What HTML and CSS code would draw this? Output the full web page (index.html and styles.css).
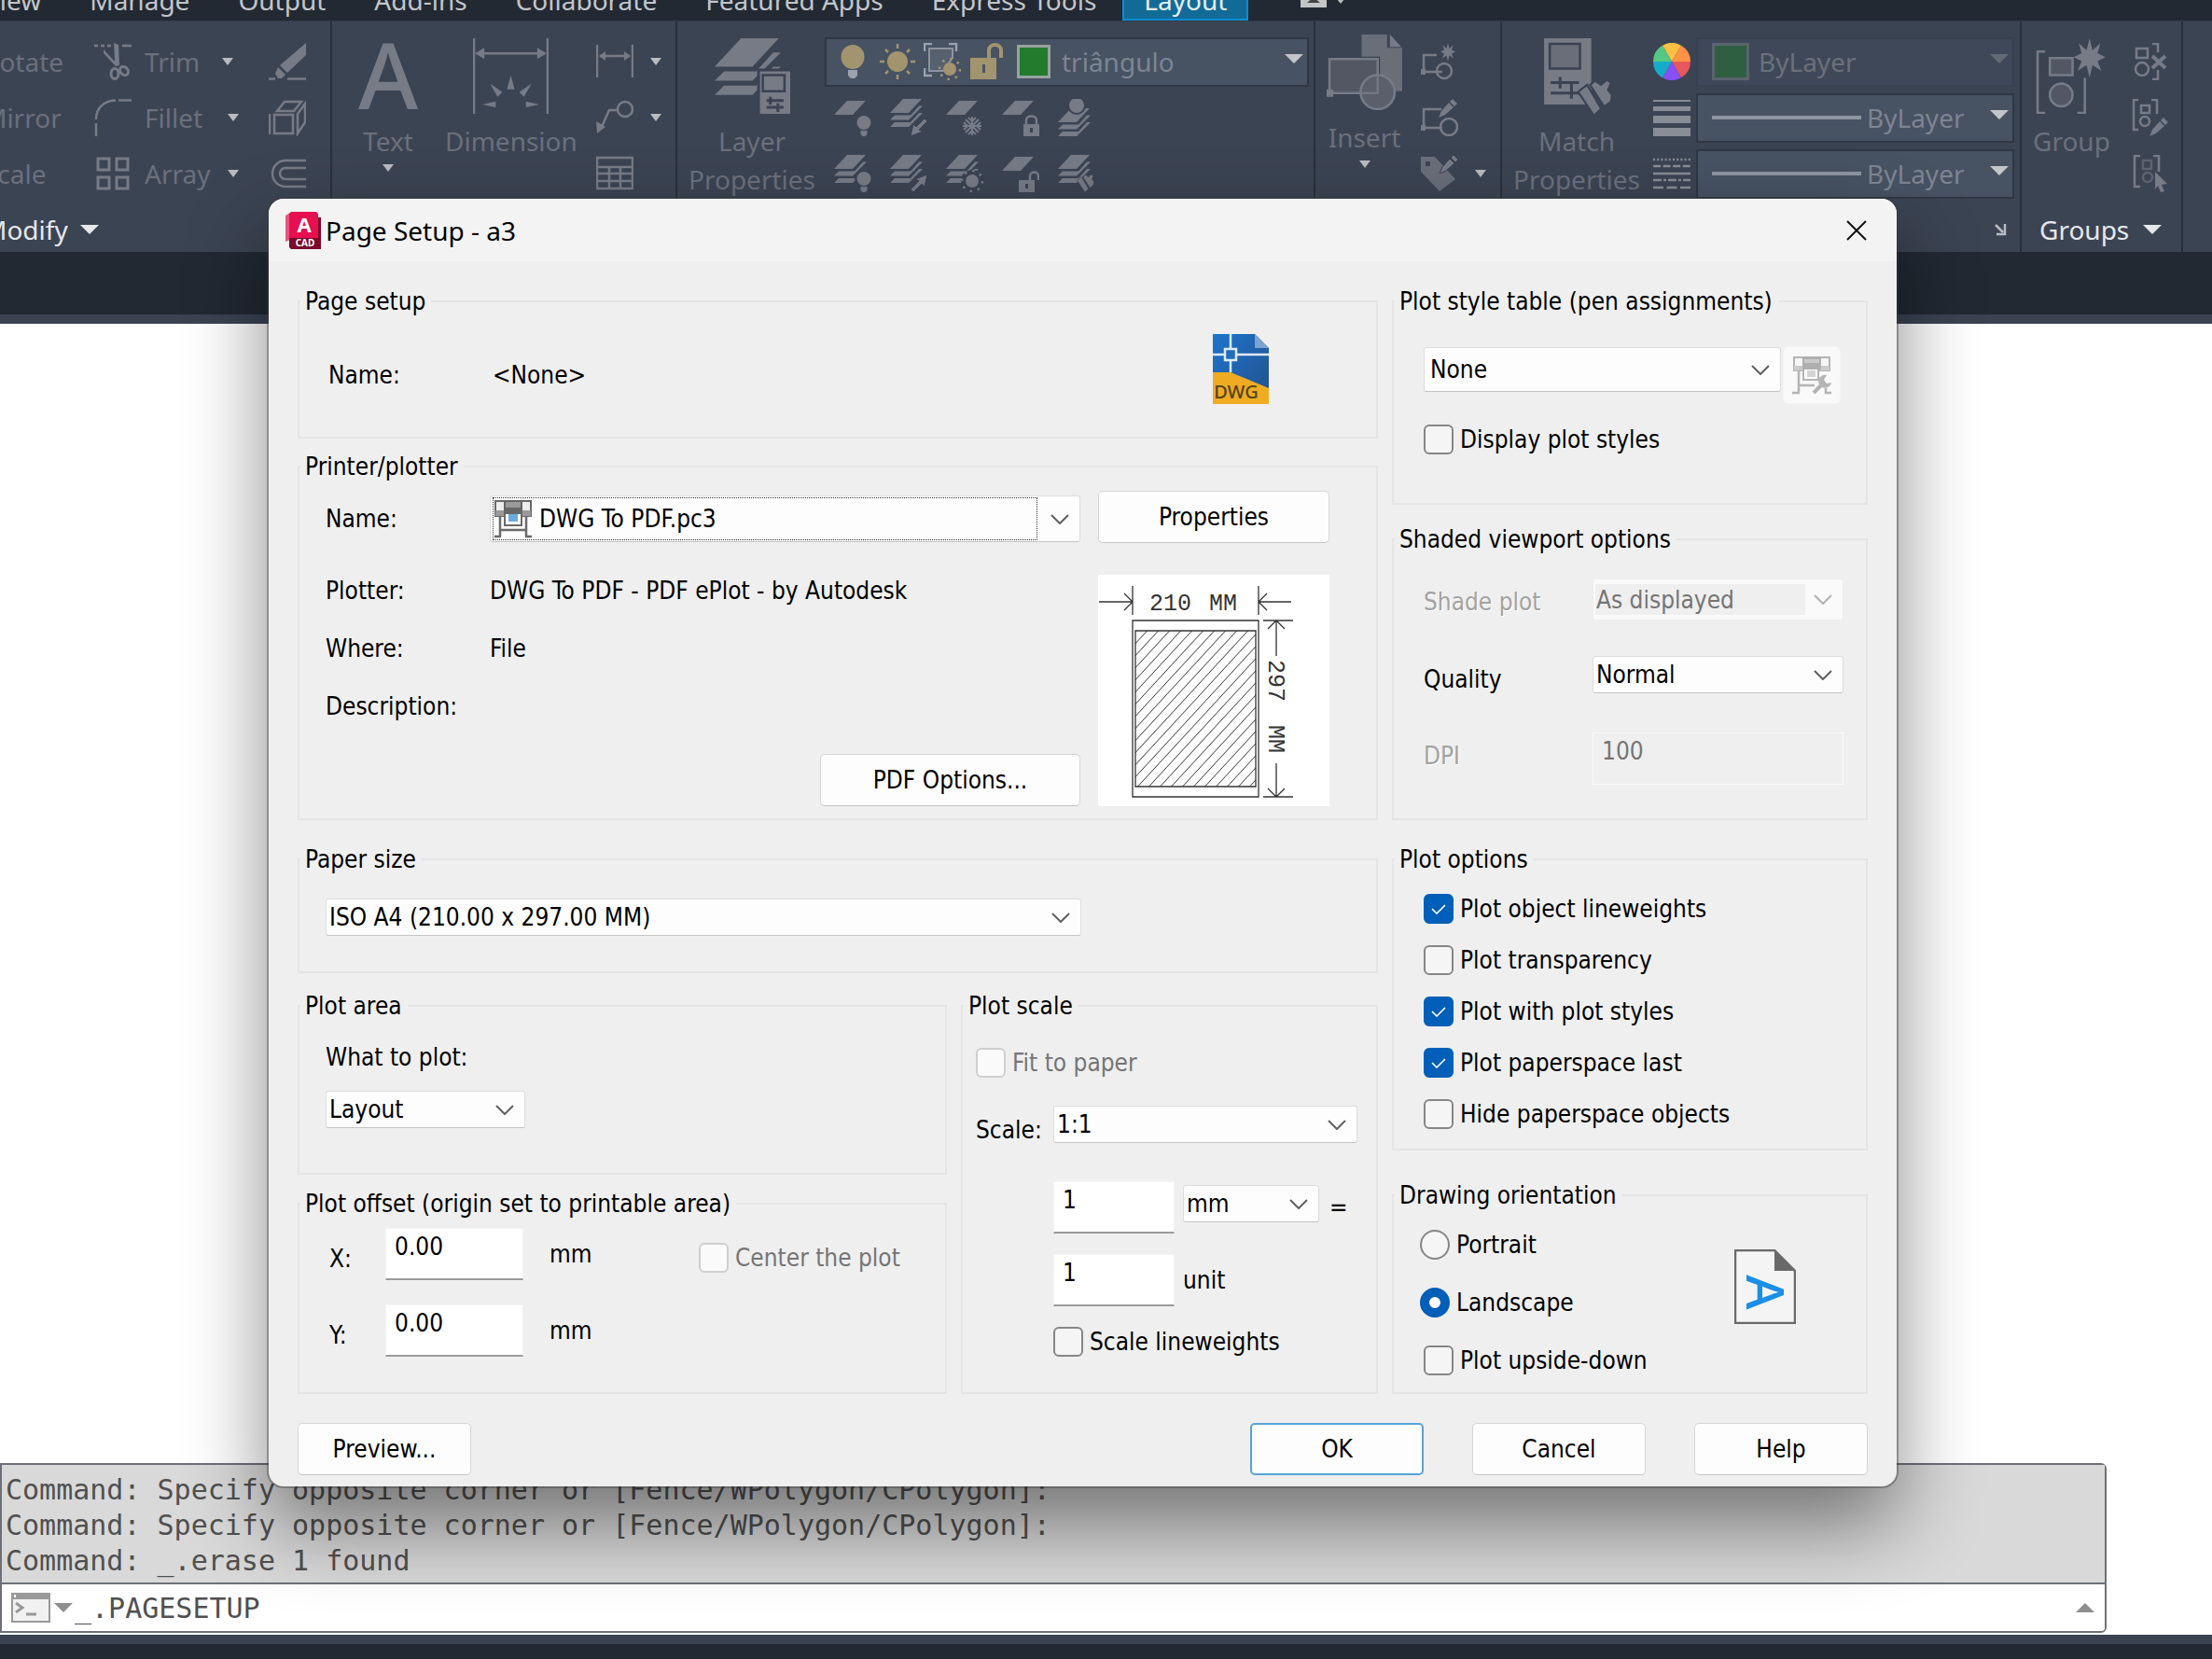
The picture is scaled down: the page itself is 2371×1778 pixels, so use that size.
FILE: index.html
```
<!DOCTYPE html>
<html lang="en">
<head>
  <meta charset="UTF-8" />
  <meta name="viewport" content="width=device-width, initial-scale=1.0"/>
  <title>Page Setup - a3</title>
  <link rel="stylesheet" href="styles.css">
</head>
<body>
  <!-- shared icon parts -->
  <svg class="defs" aria-hidden="true">
    <symbol id="sheet" viewBox="0 0 40 40"><path d="M14 2h20L20 17H0z"/></symbol>
    <symbol id="sheets" viewBox="0 0 40 40">
      <path d="M14 0h20L20 15H0zM0 22.5l5-5h17l9-10h4L20 22.5zM0 30l5-5h17l9-10h4L20 30z"/>
    </symbol>
    <symbol id="bulb" viewBox="0 0 16 22"><circle cx="8" cy="7.500" r="7.500"/><path d="M4.500 16h7v4l-2 2h-3l-2-2z"/></symbol>
    <symbol id="pencil" viewBox="0 0 20 20"><path d="M15 0l5 5-3 3-5-5zM11 4l5 5-9 8-7 3 3-7z"/></symbol>
    <symbol id="brush" viewBox="0 0 34 36"><path d="M0 12L9 5l14 24-7 7zM12 5l5-4 6 4 6-5 4 3-3 7 4 5-1 7-7 5z"/></symbol>
    <symbol id="burst" viewBox="0 0 32 40"><path d="M16 0l3 12 8-7-3 10 8 4-8 4 4 10-9-6-3 13-3-13-9 6 4-10-8-4 8-4-3-10 8 7z"/></symbol>
  </svg>

  <nav class="tab-bar">
    <button class="tab">View</button>
    <button class="tab">Manage</button>
    <button class="tab">Output</button>
    <button class="tab">Add-ins</button>
    <button class="tab">Collaborate</button>
    <button class="tab">Featured Apps</button>
    <button class="tab">Express Tools</button>
    <button class="tab tab-active">Layout</button>
    <button class="tab-toggle" aria-label="Minimize ribbon"><svg width="50" height="24" viewBox="0 0 50 24"><path d="M0 0h28v24H0z" fill="#c4c5c7"/><path d="M14 13l7 6H7z" fill="#444"/><path d="M38 14h10l-5 6z" fill="#b9bbbf"/></svg></button>
  </nav>

  <div class="ribbon">
    <section class="panel panel-modify">
      <div class="panel-body">
        <div class="tool-col tool-col-text">
          <button class="tool">Rotate</button>
          <button class="tool">Mirror</button>
          <button class="tool">Scale</button>
        </div>
        <div class="tool-col tool-col-wide">
          <button class="tool">
            <svg class="icon" viewBox="0 0 40 40"><path d="M0 3h4M7 3h4M14 3h4M30 3h10" stroke="currentColor" stroke-width="2.500" fill="none"/><path d="M21 0l5 2 1 22-4 1-13-14 0-4 12 13z" fill="currentColor"/><g fill="none" stroke="currentColor" stroke-width="3"><ellipse cx="22" cy="33" rx="4" ry="5.500"/><ellipse cx="32" cy="30" rx="4" ry="5" transform="rotate(-40 32 30)"/></g></svg>
            <span class="tool-label">Trim</span><span class="caret"></span>
          </button>
          <button class="tool">
            <svg class="icon" viewBox="0 0 40 40"><path d="M2 40V26M2 22C2 10 10 2 23 1.500M26 1.500h14" stroke="currentColor" stroke-width="2.500" fill="none"/></svg>
            <span class="tool-label tool-label-wide">Fillet</span><span class="caret"></span>
          </button>
          <button class="tool">
            <svg class="icon" viewBox="0 0 40 40"><path d="M4 4h12v12H4zM24 4h12v12H24zM4 24h12v12H4zM24 24h12v12H24z" stroke="currentColor" stroke-width="3" fill="none"/></svg>
            <span class="tool-label tool-label-wide">Array</span><span class="caret"></span>
          </button>
        </div>
        <div class="tool-col">
          <button class="tool" aria-label="Erase"><svg class="icon" viewBox="0 0 40 40"><path d="M40 0v13L20 32l-8-8zM10 26l8 8-4 4H10l-3-5z" fill="currentColor"/><path d="M0 38.500h7M20 38.500h20" stroke="currentColor" stroke-width="2.500"/></svg></button>
          <button class="tool" aria-label="Explode"><svg class="icon" viewBox="0 0 40 40"><path d="M1 16v22M6 17h20v20H6zM9 13l8-10h18l-8 10zM31 16l8-11v20l-8 12z" stroke="currentColor" stroke-width="2.500" fill="none"/></svg></button>
          <button class="tool" aria-label="Offset"><svg class="icon" viewBox="0 0 40 40"><path d="M40 6H18a14 14 0 0 0 0 28h22M40 14H18a6 6 0 0 0 0 12h22" stroke="currentColor" stroke-width="2.500" fill="none"/></svg></button>
        </div>
      </div>
      <footer class="panel-title">Modify <span class="caret caret-big"></span></footer>
    </section>

    <section class="panel panel-annotation">
      <div class="panel-body">
        <button class="big-tool big-tool-text">
          <span class="letter-icon">A</span>
          <span class="big-label">Text</span><span class="caret"></span>
        </button>
        <button class="big-tool">
          <svg class="big-icon" viewBox="0 0 80 80"><path d="M1 0v80M79 0v80M8 16h64" stroke="currentColor" stroke-width="2.500"/><path d="M2 16l10-6v12zM78 16l-10-6v12zM40 39l4 15h-8zM18 48l13 9-5 5zM62 48l-13 9 5 5zM10 70l14-3v6zM70 70l-14-3v6z" fill="currentColor"/></svg>
          <span class="big-label">Dimension</span>
        </button>
        <div class="tool-col tool-col-carets">
          <button class="tool" aria-label="Linear"><svg class="icon" viewBox="0 0 40 40"><path d="M1 2v35M39 2v35M4 14h32" stroke="currentColor" stroke-width="2.500"/><path d="M3 14l7-5v10zM37 14l-7-5v10z" fill="currentColor"/></svg><span class="caret"></span></button>
          <button class="tool" aria-label="Leader"><svg class="icon" viewBox="0 0 40 40"><path d="M5 32l9-20h8" stroke="currentColor" stroke-width="2.500" fill="none"/><circle cx="31" cy="11" r="8" stroke="currentColor" stroke-width="2.500" fill="none"/><path d="M0 24l10 6L1 37z" fill="currentColor"/></svg><span class="caret"></span></button>
          <button class="tool" aria-label="Table"><svg class="icon" viewBox="0 0 40 40"><path d="M1 3h38v33H1zM1 13h38M1 20h38M1 28h38M14 13v23M26 13v23" stroke="currentColor" stroke-width="2.500" fill="none"/></svg></button>
        </div>
      </div>
    </section>

    <section class="panel panel-layers">
      <div class="panel-body">
        <button class="big-tool">
          <svg class="big-icon" viewBox="0 0 80 80"><use href="#sheets" width="80" height="80" fill="currentColor"/><path d="M45 32h38v52H45z" fill="#3b4252"/><path d="M48 35h32v45H48z" fill="currentColor"/><path d="M51 39h23v17H51z" stroke="#3b4252" stroke-width="2.500" fill="none"/><path d="M55 66h18M55 73h18M59 62v8M67 69v9" stroke="#3b4252" stroke-width="3"/></svg>
          <span class="big-label">Layer<br>Properties</span>
        </button>
        <div class="layer-tools">
          <div class="ribbon-combo layer-combo">
            <svg class="icon" viewBox="0 0 40 40"><ellipse cx="20" cy="15" rx="12.500" ry="13" fill="#a2946f"/><path d="M15 29h10v6l-3 3h-4l-3-3z" fill="#9ba2b0"/></svg>
            <svg class="icon" viewBox="0 0 40 40"><circle cx="20" cy="20" r="11" fill="#a2946f"/><path d="M20 1v5M20 34v5M1 20h5M34 20h5M7 7l3 3M30 30l3 3M33 7l-3 3M7 33l3-3" stroke="#a2946f" stroke-width="2.500"/></svg>
            <svg class="icon" viewBox="0 0 40 40"><path d="M9 1H1v8M27 1h8v8M9 35H1v-8" stroke="#9aa1ad" stroke-width="2.500" fill="none"/><path d="M6 6h25v10l-10 14H6z" fill="#56616f" stroke="#8d949f" stroke-width="2"/><circle cx="28" cy="28" r="7" fill="#a2946f"/><circle cx="28" cy="28" r="11" fill="none" stroke="#a2946f" stroke-width="2.500" stroke-dasharray="2.500 6.100"/></svg>
            <svg class="icon" viewBox="0 0 40 40"><path d="M2 16h28v23H2z" fill="#a2946f"/><path d="M22 17V8c0-8 13-8 13 0v8" stroke="#a2946f" stroke-width="4" fill="none"/><path d="M15 23h3v9h-3z" fill="#4a5566"/></svg>
            <span class="swatch"></span>
            <select aria-label="Layer"><option>triângulo</option></select>
          </div>
          <div class="tool-row">
            <button class="tool" aria-label="Off"><svg class="icon" viewBox="0 0 40 40" fill="currentColor"><use href="#sheet" width="40" height="40"/><use href="#bulb" x="24" y="18" width="16" height="22"/></svg></button>
            <button class="tool" aria-label="Isolate"><svg class="icon" viewBox="0 0 40 40" fill="currentColor"><use href="#sheets" width="40" height="40"/><path d="M37 21l3 3-9 9 4 2-13 5 3-13 3 3z" stroke="#3c4252" stroke-width="1"/></svg></button>
            <button class="tool" aria-label="Freeze"><svg class="icon" viewBox="0 0 40 40" fill="currentColor"><use href="#sheet" width="40" height="40"/><path d="M28 19v20M18 29h20M21 22l14 14M35 22L21 36M24 20l4 4 4-4M24 38l4-4 4 4M19 25l4 4-4 4M37 25l-4 4 4 4" stroke="currentColor" stroke-width="2" fill="none"/></svg></button>
            <button class="tool" aria-label="Lock"><svg class="icon" viewBox="0 0 40 40" fill="currentColor"><use href="#sheet" width="40" height="40"/><path fill-rule="evenodd" d="M23 27h17v13H23zM30 31v5h3v-5z"/><path d="M26 27v-4c0-6 11-6 11 0v4" stroke="currentColor" stroke-width="2.500" fill="none"/></svg></button>
            <button class="tool" aria-label="Make current"><svg class="icon" viewBox="0 0 40 40" fill="currentColor"><g transform="translate(0 10)"><use href="#sheets" width="40" height="40"/></g><circle cx="20" cy="7" r="9" stroke="#3c4252" stroke-width="2"/></svg></button>
          </div>
          <div class="tool-row">
            <button class="tool" aria-label="Turn all on"><svg class="icon" viewBox="0 0 40 40" fill="currentColor"><use href="#sheets" width="40" height="40"/><circle cx="32" cy="25" r="10" fill="#3c4252"/><use href="#bulb" x="24" y="18" width="16" height="22"/></svg></button>
            <button class="tool" aria-label="Unisolate"><svg class="icon" viewBox="0 0 40 40" fill="currentColor"><use href="#sheets" width="40" height="40"/><path d="M25 40l-3-3 9-9-4-2 13-5-3 13-3-3z" stroke="#3c4252" stroke-width="1"/></svg></button>
            <button class="tool" aria-label="Thaw all"><svg class="icon" viewBox="0 0 40 40" fill="currentColor"><use href="#sheets" width="40" height="40"/><circle cx="28" cy="28" r="12" fill="#3c4252"/><circle cx="28" cy="28" r="7"/><circle cx="28" cy="28" r="11" fill="none" stroke="currentColor" stroke-width="2.500" stroke-dasharray="2.500 6.100"/></svg></button>
            <button class="tool" aria-label="Unlock"><svg class="icon" viewBox="0 0 40 40" fill="currentColor"><use href="#sheet" width="40" height="40"/><path fill-rule="evenodd" d="M18 27h17v13H18zM25 31v5h3v-5z"/><path d="M30 27v-4c0-6 9-6 9 0v4" stroke="currentColor" stroke-width="2.500" fill="none"/></svg></button>
            <button class="tool" aria-label="Match layer"><svg class="icon" viewBox="0 0 40 40" fill="currentColor"><use href="#sheets" width="40" height="40"/><use href="#brush" x="20" y="21" width="19" height="19" stroke="#3c4252"/></svg></button>
          </div>
        </div>
      </div>
    </section>

    <section class="panel panel-block">
      <div class="panel-body">
        <button class="big-tool big-tool-high">
          <svg class="big-icon" viewBox="0 0 80 80"><path d="M37 0h27v14h16v46H66L37 26z" fill="#6a6e79"/><path d="M67 0l12 13H67z" fill="currentColor"/><path d="M3 26h51v36H3z" fill="#525763" stroke="#3b4252" stroke-width="5"/><path d="M3 26h51v36H3z" fill="#525763" stroke="currentColor" stroke-width="2.500"/><circle cx="54" cy="61" r="18" fill="#5a5f6b" stroke="currentColor" stroke-width="2.500"/><path d="M54 43v19H36" stroke="currentColor" stroke-width="2" fill="none"/><path d="M0 58h7v8H0z" fill="currentColor"/></svg>
          <span class="big-label">Insert</span><span class="caret"></span>
        </button>
        <div class="tool-col">
          <button class="tool" aria-label="Create block"><svg class="icon" viewBox="0 0 40 40"><path d="M17 13H3v18h20" stroke="currentColor" stroke-width="2.500" fill="none"/><circle cx="25" cy="30" r="8" stroke="currentColor" stroke-width="2.500" fill="none"/><path d="M0 28h5v6H0z" fill="currentColor"/><use href="#burst" x="18" y="0" width="22" height="20" fill="currentColor"/></svg></button>
          <button class="tool" aria-label="Edit block"><svg class="icon" viewBox="0 0 40 40"><path d="M22 11H3v20h20" stroke="currentColor" stroke-width="2.500" fill="none"/><circle cx="30" cy="30" r="9" stroke="currentColor" stroke-width="2.500" fill="none"/><path d="M0 28h5v6H0z" fill="currentColor"/><use href="#pencil" x="19" y="0" width="20" height="20" fill="currentColor"/></svg></button>
          <button class="tool" aria-label="Edit attributes"><svg class="icon" viewBox="0 0 40 40"><path fill-rule="evenodd" d="M0 2h15l22 24-17 13L0 18zM5 7v5h5V7z" fill="#6a6e79"/><use href="#pencil" x="20" y="0" width="20" height="20" fill="currentColor" stroke="#3b4252"/></svg><span class="caret"></span></button>
        </div>
      </div>
    </section>

    <section class="panel panel-properties">
      <div class="panel-body">
        <button class="big-tool">
          <svg class="big-icon" viewBox="0 0 80 80"><path d="M5 0h50v70H5z" fill="currentColor"/><path d="M11 6h32v26H11z" fill="#6a6e79" stroke="#3b4252" stroke-width="2.500"/><path d="M12 47h30M22 41v12M12 58h16M34 48v16M28 58h14" stroke="#3b4252" stroke-width="3"/><use href="#brush" x="40" y="44" width="38" height="38" fill="currentColor" stroke="#3b4252" stroke-width="2"/></svg>
          <span class="big-label">Match<br>Properties</span>
        </button>
        <div class="tool-col">
          <button class="tool" aria-label="Object colour"><svg class="icon" viewBox="0 0 40 40"><path d="M20 20L10 2.700A20 20 0 0 1 30 2.700z" fill="#ffc043"/><path d="M20 20L30 2.700A20 20 0 0 1 40 20z" fill="#ff9345"/><path d="M20 20h20a20 20 0 0 1-10 17.300z" fill="#e6585c"/><path d="M20 20l10 17.300a20 20 0 0 1-20 0z" fill="#8650f5"/><path d="M20 20L10 37.300A20 20 0 0 1 0 20z" fill="#14adc9"/><path d="M20 20H0A20 20 0 0 1 10 2.700z" fill="#53c983"/></svg></button>
          <button class="tool" aria-label="Lineweight"><svg class="icon" viewBox="0 0 40 40" fill="#888d95"><path d="M0 1h40v2H0zM0 8h40v5H0zM0 18h40v8H0zM0 31h40v9H0z"/></svg></button>
          <button class="tool" aria-label="Linetype"><svg class="icon" viewBox="0 0 40 40" stroke="#888d95" stroke-width="2.500"><path d="M0 5h40" stroke-dasharray="2 2.200"/><path d="M0 12h40" stroke-dasharray="8 2.600"/><path d="M0 20h40"/><path d="M0 27h40" stroke-dasharray="9 2 3 2"/><path d="M0 35h40" stroke-dasharray="11 3.500"/></svg></button>
        </div>
        <div class="tool-col property-combos">
          <div class="ribbon-combo ribbon-combo-off"><span class="swatch swatch-off"></span><select aria-label="Colour" disabled><option>ByLayer</option></select></div>
          <div class="ribbon-combo"><span class="line-sample"></span><select aria-label="Lineweight"><option>ByLayer</option></select></div>
          <div class="ribbon-combo"><span class="line-sample"></span><select aria-label="Linetype"><option>ByLayer</option></select></div>
        </div>
      </div>
      <footer class="panel-title panel-title-end">
        <svg width="14" height="14" viewBox="0 0 14 14"><path d="M2 2l8 8M12 1v11H3" stroke="#b9bbbf" stroke-width="2.500" fill="none"/></svg>
      </footer>
    </section>

    <section class="panel panel-groups">
      <div class="panel-body">
        <button class="big-tool">
          <svg class="big-icon" viewBox="0 0 80 80"><path d="M12 14H4v65h8M46 79h8V42" stroke="currentColor" stroke-width="2.500" fill="none"/><path d="M17 21h24v18H17z" fill="#525763" stroke="currentColor" stroke-width="2.500"/><circle cx="29" cy="60" r="12" fill="#525763" stroke="currentColor" stroke-width="2.500"/><use href="#burst" x="38" y="0" width="42" height="42" fill="currentColor"/></svg>
          <span class="big-label">Group</span>
        </button>
        <div class="tool-col">
          <button class="tool" aria-label="Ungroup"><svg class="icon" viewBox="0 0 40 40"><path d="M5 6h12v10H5z" fill="none" stroke="currentColor" stroke-width="2.500"/><circle cx="11" cy="28" r="7" fill="none" stroke="currentColor" stroke-width="2.500"/><path d="M22 1h6v9M22 39h6V29" stroke="currentColor" stroke-width="2.500" fill="none"/><path d="M22 14l14 13M36 14L22 27" stroke="currentColor" stroke-width="4"/></svg></button>
          <button class="tool" aria-label="Group edit"><svg class="icon" viewBox="0 0 40 40"><path d="M7 1H2v32h5M21 1h6v15" stroke="currentColor" stroke-width="2.500" fill="none"/><path d="M10 7h9v8h-9z" fill="none" stroke="currentColor" stroke-width="2.500"/><circle cx="14" cy="24" r="5" fill="none" stroke="currentColor" stroke-width="2.500"/><use href="#pencil" x="19" y="20" width="20" height="20" fill="currentColor"/></svg></button>
          <button class="tool" aria-label="Group selection"><svg class="icon" viewBox="0 0 40 40"><path d="M9 1H3v33h6M23 1h6v17" stroke="currentColor" stroke-width="2.500" fill="none"/><path d="M12 6h9v9h-9z" fill="none" stroke="#5d626e" stroke-width="2.500"/><circle cx="17" cy="24" r="5" fill="none" stroke="#5d626e" stroke-width="2.500"/><path d="M25 18l13 13-6 1 3 7-4 1-3-7-3 4z" fill="currentColor"/></svg></button>
        </div>
      </div>
      <footer class="panel-title">Groups <span class="caret caret-big"></span></footer>
    </section>
  </div>

  <div class="file-tabs"></div>

  <main class="canvas">
    <div class="command">
      <div class="command-history">
        <p>Command: Specify opposite corner or [Fence/WPolygon/CPolygon]:</p>
        <p>Command: Specify opposite corner or [Fence/WPolygon/CPolygon]:</p>
        <p>Command: _.erase 1 found</p>
      </div>
      <div class="command-line">
        <svg width="42" height="32" viewBox="0 0 42 32"><path d="M1 1h40v30H1z" fill="#f1f1f1" stroke="#999" stroke-width="2"/><path d="M0 0h42v7H0z" fill="#999"/><path d="M3 2h2v3H3z" fill="#fff"/><path d="M5 11l7 5-7 5M16 23h11" stroke="#999" stroke-width="3" fill="none"/></svg>
        <span class="caret caret-big caret-gray"></span>
        <input class="command-input" type="text" value="_.PAGESETUP" aria-label="Command line">
        <span class="caret-up"></span>
      </div>
    </div>
  </main>
  <div class="status-bar"></div>

  <form class="dialog" onsubmit="return false">
    <header class="dialog-title">
      <svg width="38" height="40" viewBox="0 0 38 40"><path d="M0 4l5-3v29l-5 2z" fill="#ee5080"/><path d="M34 6h4v34H6z" fill="#7d0a2c"/><path d="M4 2l2-2h27l2 2v26H4z" fill="#e61050"/><path d="M4 28h34v10l-2 2H6l-2-2z" fill="#7d0a2c"/><text class="app-letter" x="20" y="22">A</text><text class="app-name" x="21" y="37">CAD</text></svg>
      <h1>Page Setup - a3</h1>
      <button class="close" type="button" aria-label="Close"><svg width="22" height="22" viewBox="0 0 22 22"><path d="M1 1l20 20M21 1L1 21" stroke="#111" stroke-width="2"/></svg></button>
    </header>

    <div class="dialog-body">
      <div class="column">
        <fieldset class="group group-setup">
          <legend>Page setup</legend>
          <div class="setup-name"><span>Name:</span><span>&lt;None&gt;</span></div>
          <svg width="62" height="77" viewBox="0 0 62 77">
            <defs><linearGradient id="blue" x1="0" y1="0" x2="1" y2="1"><stop offset="0" stop-color="#1e74cc"/><stop offset="1" stop-color="#23508c"/></linearGradient></defs>
            <path d="M1 1h45l15 15v60H1z" fill="url(#blue)"/><path d="M46 1l15 15H46z" fill="#7ba3d2"/>
            <path d="M1 42h19l41 17v17H1z" fill="#efac22"/>
            <path d="M20 1v41M1 23h60" stroke="#dfe9f5" stroke-width="2.500"/><path d="M14 17h12v12H14z" fill="#1f6dbd" stroke="#dfe9f5" stroke-width="2.500"/>
            <text class="dwg-text" x="26" y="70">DWG</text>
          </svg>
        </fieldset>

        <fieldset class="group group-printer">
          <legend>Printer/plotter</legend>
          <div class="printer-info">
            <div class="field">
              <label for="printer">Name:</label>
              <div class="printer-select">
                <select id="printer"><option>DWG To PDF.pc3</option></select>
                <svg width="42" height="42" viewBox="0 0 42 42"><path d="M2 2h10v16H2zM30 2h10v16H30z" fill="#eee" stroke="#696969" stroke-width="2"/><path d="M2 12h10v6H2zM30 12h10v6H30z" fill="#999"/><path d="M11 1h20v16H11z" fill="#666"/><path d="M13 3h16v6H13z" fill="#999"/><path d="M12 16v12h18V16" fill="#fff" stroke="#696969" stroke-width="2"/><path d="M16 16h10v8H16z" fill="#69ade0"/><path d="M7 18v22M35 18v22M7 33h28M1 40h7M34 40h7" stroke="#696969" stroke-width="2.500"/></svg>
              </div>
            </div>
            <div class="info-rows">
              <div class="field"><span>Plotter:</span><span>DWG To PDF - PDF ePlot - by Autodesk</span></div>
              <div class="field"><span>Where:</span><span>File</span></div>
              <div class="field"><span>Description:</span><span></span></div>
            </div>
            <button class="btn btn-pdf" type="button">PDF Options...</button>
          </div>
          <div class="printer-side">
            <button class="btn" type="button">Properties</button>
            <svg class="paper" width="248" height="248" viewBox="0 0 248 248">
              <defs><pattern id="hatch" width="12" height="13" patternUnits="userSpaceOnUse"><path d="M-1 14L13 -1M-7 7.500L1 -1M11 14L18 6.500" stroke="#333" stroke-width="1"/></pattern></defs>
              <path d="M0 0h248v248H0z" fill="#fff"/>
              <path d="M40 60h129v167H40z" fill="url(#hatch)"/>
              <g fill="none" stroke="#333" stroke-width="1.300">
                <path d="M37 49h135v189H37zM40 60h129v167H40z"/>
                <path d="M37 12v31M172 12v31M1 29h36M28 20l9 9-9 9M207 29h-35M181 20l-9 9 9 9"/>
                <path d="M177 49h32M177 238h32M191 49v38M182 58l9-9 9 9M191 202v36M182 229l9 9 9-9"/>
              </g>
              <text class="dim" x="55" y="38">210</text><text class="dim" x="119" y="38">MM</text>
              <g transform="translate(183 91) rotate(90)"><text class="dim" x="0" y="0">297</text><text class="dim" x="70" y="0">MM</text></g>
            </svg>
          </div>
        </fieldset>
      </div>

      <div class="column">
        <fieldset class="group group-style">
          <legend>Plot style table (pen assignments)</legend>
          <div class="style-row">
            <select aria-label="Plot style table"><option>None</option></select>
            <button class="btn icon-btn" type="button" disabled aria-label="Edit"><svg width="42" height="42" viewBox="0 0 42 42"><path d="M2 2h10v14H2zM30 2h10v14H30z" fill="#f6f6f6" stroke="#b4b4b4" stroke-width="2"/><path d="M2 11h10v5H2zM30 11h10v5H30z" fill="#ccc"/><path d="M11 1h20v14H11z" fill="#afafaf"/><path d="M13 4h16v4H13z" fill="#cacaca"/><path d="M12 15v11h16V15" fill="#fff" stroke="#b4b4b4" stroke-width="2"/><path d="M16 16h9v7h-9z" fill="#d3d3d3"/><path d="M7 16v23M7 32h17M0 40h8M36 35v5h6" stroke="#b4b4b4" stroke-width="2.500" fill="none"/><path d="M23 40l11-11" stroke="#b4b4b4" stroke-width="4"/><path d="M37 21a7 7 0 1 0 5 8l-5 1-3-4z" fill="#b4b4b4"/></svg></button>
          </div>
          <label class="check"><input type="checkbox"> Display plot styles</label>
        </fieldset>

        <fieldset class="group group-shaded">
          <legend>Shaded viewport options</legend>
          <label class="off-label" for="shade">Shade plot</label>
          <select id="shade" disabled><option>As displayed</option></select>
          <label for="quality">Quality</label>
          <select id="quality"><option>Normal</option></select>
          <label class="off-label" for="dpi">DPI</label>
          <input id="dpi" class="text" type="text" value="100" disabled>
        </fieldset>
      </div>

      <div class="column">
        <fieldset class="group group-paper">
          <legend>Paper size</legend>
          <select aria-label="Paper size"><option>ISO A4 (210.00 x 297.00 MM)</option></select>
        </fieldset>

        <div class="split">
          <div class="column">
            <fieldset class="group group-area">
              <legend>Plot area</legend>
              <label for="what">What to plot:</label>
              <select id="what"><option>Layout</option></select>
            </fieldset>
            <fieldset class="group group-offset">
              <legend>Plot offset (origin set to printable area)</legend>
              <div class="offset-row">
                <label class="axis" for="x">X:</label>
                <input id="x" class="text" type="text" value="0.00">
                <span class="unit">mm</span>
                <label class="check check-off"><input type="checkbox" disabled> Center the plot</label>
              </div>
              <div class="offset-row">
                <label class="axis" for="y">Y:</label>
                <input id="y" class="text" type="text" value="0.00">
                <span class="unit">mm</span>
              </div>
            </fieldset>
          </div>

          <fieldset class="group group-scale">
            <legend>Plot scale</legend>
            <label class="check check-off"><input type="checkbox" disabled> Fit to paper</label>
            <div class="scale-row">
              <label class="scale-label" for="scale">Scale:</label>
              <select id="scale"><option>1:1</option></select>
            </div>
            <div class="scale-values">
              <div class="value-row">
                <input class="text" type="text" value="1" aria-label="Paper units">
                <select class="unit-select" aria-label="Unit"><option>mm</option></select>
                <span class="equals">=</span>
              </div>
              <div class="value-row">
                <input id="unit" class="text" type="text" value="1">
                <label for="unit">unit</label>
              </div>
              <label class="check"><input type="checkbox"> Scale lineweights</label>
            </div>
          </fieldset>
        </div>
      </div>

      <div class="column">
        <fieldset class="group group-options">
          <legend>Plot options</legend>
          <label class="check"><input type="checkbox" checked> Plot object lineweights</label>
          <label class="check"><input type="checkbox"> Plot transparency</label>
          <label class="check"><input type="checkbox" checked> Plot with plot styles</label>
          <label class="check"><input type="checkbox" checked> Plot paperspace last</label>
          <label class="check"><input type="checkbox"> Hide paperspace objects</label>
        </fieldset>

        <fieldset class="group group-orientation">
          <legend>Drawing orientation</legend>
          <div class="orientation-list">
            <label class="check"><input type="radio" name="orientation"> Portrait</label>
            <label class="check"><input type="radio" name="orientation" checked> Landscape</label>
            <label class="check check-indent"><input type="checkbox"> Plot upside-down</label>
          </div>
          <svg class="page-icon" width="66" height="80" viewBox="0 0 66 80"><path d="M1 1h42l22 22v56H1z" fill="#f4f4f4" stroke="#696969" stroke-width="2.500"/><path d="M43 1l22 22H43z" fill="#696969"/><text class="page-letter" transform="translate(13 46) rotate(90)">A</text></svg>
        </fieldset>
      </div>
    </div>

    <div class="dialog-buttons">
      <button class="btn btn-preview" type="button">Preview...</button>
      <button class="btn btn-default" type="submit">OK</button>
      <button class="btn" type="button">Cancel</button>
      <button class="btn" type="button">Help</button>
    </div>
  </form>
</body>
</html>
```

FILE: styles.css
```
* {
  margin: 0; padding: 0; box-sizing: border-box;
}

body {
  position: relative;
  display: flex;
  flex-direction: column;
  min-height: 100vh;
  background: #fff;
  font-family: 'Noto Sans', 'Open Sans', sans-serif;
  font-size: 28px;
  color: #6b707c;
  overflow: hidden;
}

button, select, input {
  font: inherit;
  color: inherit;
  border: none;
  background: none;
}

select {
  appearance: none;
}

svg {
  display: block;
  flex: none;
}

.defs {
  position: absolute;
  width: 0; height: 0;
}

/* ribbon */

.tab-bar {
  display: flex;
  align-items: flex-end;
  gap: 4px;
  height: 22px;
  overflow: hidden;
  background: #222933;
  color: #c3c5c9;
}

.tab {
  flex: none;
  height: 44px;
  padding: 0 24px;
  line-height: 36px;
}

.tab:first-child {
  margin-left: -41px;
}

.tab-active {
  padding: 0 21px;
  background: #126b97;
  border: 2px solid #0a8ed5;
  line-height: 32px;
  color: #e4eef4;
}

.tab-toggle {
  margin: 0 0 14px 52px;
}

.ribbon {
  display: flex;
  height: 248px;
  overflow: hidden;
  background: #3b4453;
  border-top: 1px solid #333c49;
}

.panel {
  display: flex;
  flex-direction: column;
  flex: none;
  padding-top: 13px;
  border-right: 2px solid #28303b;
}

.panel-body {
  display: flex;
  height: 180px;
}

.panel-title {
  display: flex;
  align-items: center;
  gap: 13px;
  height: 54px;
  padding-top: 6px;
  color: #e6e7e9;
}

.panel-title-end {
  justify-content: flex-end;
  padding-right: 14px;
}

.panel-modify { width: 356px; }
.panel-modify .panel-body, .panel-modify .panel-title { margin-left: -18px; }
.panel-annotation { width: 370px; padding-left: 19px; }
.panel-annotation .panel-body { gap: 20px; }
.panel-layers { width: 684px; padding-left: 12px; }
.panel-layers .panel-body { gap: 10px; }
.panel-block { width: 200px; padding-left: 12px; }
.panel-block .panel-body { gap: 20px; }
.panel-properties { width: 557px; padding-left: 12px; }
.panel-groups { width: 173px; padding-left: 12px; }
.panel-groups .panel-body { gap: 23px; }
.panel-groups .panel-title { padding-left: 7px; gap: 15px; }

.tool-col {
  display: grid;
  grid-template-rows: repeat(3, 60px);
}

.tool-col-text { width: 119px; }
.tool-col-wide { width: 187px; }

.tool {
  display: flex;
  align-items: center;
}

.icon {
  width: 40px;
  height: 40px;
  color: #777b86;
}

.tool-label {
  width: 83px;
  margin-left: 14px;
  text-align: left;
}

.tool-label-wide {
  width: 89px;
}

.tool-col-carets .caret, .panel-block .tool .caret {
  margin-left: 18px;
}

.caret {
  flex: none;
  border: 6px solid transparent;
  border-top: 8px solid #b9bbbf;
  border-bottom: none;
}

.caret-big {
  border-width: 10px;
  border-bottom-width: 0;
  border-top-color: #e6e7e9;
}

.caret-gray {
  border-top-color: #8f8f8f;
}

.caret-up {
  border: 10px solid transparent;
  border-bottom-color: #8f8f8f;
  border-top: none;
}

.big-tool {
  display: flex;
  flex-direction: column;
  align-items: center;
  padding-top: 5px;
}

.big-tool-text {
  width: 82px;
}

.big-tool-high {
  padding-top: 1px;
}

.big-tool .caret {
  margin-top: 4px;
}

.big-icon {
  width: 81px;
  height: 81px;
  color: #777b86;
}

.letter-icon {
  height: 81px;
  font-size: 98px;
  font-weight: 500;
  line-height: 77px;
  color: #777b86;
}

.big-label {
  margin-top: 9px;
  line-height: 41px;
}

.layer-tools {
  width: 519px;
  display: grid;
  grid-template-rows: repeat(3, 60px);
  align-items: center;
}

.tool-row {
  display: flex;
  gap: 20px;
  padding-left: 10px;
}

.ribbon-combo {
  display: flex;
  align-items: center;
  gap: 6px;
  height: 53px;
  padding: 0 4px 0 15px;
  background: #475263;
  border: 2px solid #2f3744;
}

.ribbon-combo select {
  flex: 1;
  min-width: 0;
  height: 44px;
  background: url("data:image/svg+xml,%3Csvg xmlns='http://www.w3.org/2000/svg' width='20' height='10'%3E%3Cpath d='M0 0h20L10 10z' fill='%23c3c5c9'/%3E%3C/svg%3E") no-repeat right 14px;
  color: #7d8592;
}

.layer-combo {
  gap: 8px;
  padding: 0 4px 0 8px;
}

.property-combos {
  width: 341px;
  margin-left: 6px;
  align-items: center;
}

.panel-properties .tool-col:not(.property-combos) {
  margin-left: 14px;
}

.ribbon-combo-off {
  gap: 10px;
  background: #3f4858;
  border-color: #384150;
}

.ribbon-combo-off select {
  background-image: url("data:image/svg+xml,%3Csvg xmlns='http://www.w3.org/2000/svg' width='20' height='10'%3E%3Cpath d='M0 0h20L10 10z' fill='%23636a76'/%3E%3C/svg%3E");
  color: #6b707c;
  opacity: 1;
}

.swatch {
  flex: none;
  width: 36px;
  height: 36px;
  margin: 0 4px;
  background: #237b2e;
  border: 3px solid #98a29f;
}

.swatch-off {
  width: 40px;
  height: 40px;
  margin: 0;
  background: #2f5f41;
  border-color: #5a636e;
}

.line-sample {
  flex: none;
  width: 160px;
  height: 4px;
  background: #8d95a1;
}

/* drawing area and command line */

.file-tabs {
  height: 77px;
  background: #222933;
  border-bottom: 10px solid #3b4353;
}

.canvas {
  flex: 1;
  display: flex;
  align-items: flex-end;
  padding: 0 113px 2px 0;
}

.command {
  flex: 1;
  border: 2px solid #6d7078;
  border-radius: 0 6px 6px 0;
  font-family: 'DejaVu Sans Mono', 'Liberation Mono', monospace;
  font-size: 30px;
  color: #505050;
}

.command-history {
  padding: 8px 4px 4px;
  line-height: 38px;
  background: #d9d9d9;
  border-bottom: 2px solid #6d7078;
}

.command-line {
  display: flex;
  align-items: center;
  height: 50px;
  padding: 0 11px 0 10px;
  background: #fff;
  border-radius: 0 0 4px 0;
}

.command-line .caret {
  margin: 0 2px 0 4px;
}

.command-input {
  flex: 1;
  height: 46px;
}

.status-bar {
  height: 26px;
  background: #222933;
  border-top: 10px solid #3b4353;
}

/* page setup dialog */

.dialog {
  position: absolute;
  left: 288px;
  top: 213px;
  width: 1745px;
  background: #efefef;
  border-radius: 16px;
  box-shadow: 0 0 0 2px rgba(60, 60, 60, 0.4), 0 40px 88px rgba(0, 0, 0, 0.48);
  font-family: 'DejaVu Sans Condensed', 'DejaVu Sans', sans-serif;
  font-size: 26px;
  line-height: 32px;
  color: #000;
}

.dialog-title {
  display: flex;
  align-items: center;
  gap: 5px;
  height: 67px;
  padding: 0 32px 0 18px;
  background: #f3f3f3;
  border-radius: 16px 16px 0 0;
}

.dialog-title h1 {
  font-family: 'Noto Sans', 'Open Sans', sans-serif;
  font-size: 28px;
  font-weight: 400;
}

.close {
  margin-left: auto;
}

.app-letter {
  font: 700 22px 'Noto Sans', sans-serif;
  fill: #fff;
  text-anchor: middle;
}

.app-name {
  font: 700 10px 'Noto Sans', sans-serif;
  fill: #fff;
  text-anchor: middle;
}

.dialog-body {
  display: grid;
  grid-template-columns: 1fr 510px;
  gap: 26px 15px;
  padding: 27px 31px 0;
}

.column {
  display: flex;
  flex-direction: column;
  justify-content: space-between;
  gap: 14px;
}

.split {
  display: flex;
  gap: 15px;
  margin-top: 5px;
}

/* --inset is the left padding; the legend always starts at the frame */
.group {
  --inset: 28px;
  padding-left: var(--inset);
  border: 2px solid #e4e4e4;
}

.group legend {
  margin-left: calc(1px - var(--inset));
  padding: 0 6px 0 5px;
}

.dialog select {
  height: 40px;
  padding: 0 40px 0 3px;
  background: #fdfdfd url("data:image/svg+xml,%3Csvg xmlns='http://www.w3.org/2000/svg' width='20' height='11'%3E%3Cpath d='M1 1l9 9 9-9' fill='none' stroke='%23606060' stroke-width='2'/%3E%3C/svg%3E") no-repeat right 11px center;
  border: 1px solid #dcdcdc;
  border-bottom-color: #c4c4c4;
  border-radius: 3px;
}

.text {
  width: 148px;
  height: 56px;
  padding: 2px 9px 18px;
  background: #fff;
  border: 1px solid #f4f4f4;
  border-bottom: 2px solid #9a9a9a;
}

.btn {
  height: 56px;
  background: #fdfdfd;
  border: 1px solid #d6d6d6;
  border-bottom-color: #c4c4c4;
  border-radius: 5px;
}

.check {
  display: flex;
  align-items: center;
  gap: 7px;
}

.check input {
  appearance: none;
  flex: none;
  width: 32px;
  height: 32px;
  background: #f5f5f5;
  border: 2px solid #868686;
  border-radius: 6px;
}

.check input:checked {
  background: #005fb8 url("data:image/svg+xml,%3Csvg xmlns='http://www.w3.org/2000/svg' width='16' height='12'%3E%3Cpath d='M1 6l5 5 9-9' fill='none' stroke='%23fff' stroke-width='1.600'/%3E%3C/svg%3E") no-repeat center;
  border-color: #005fb8;
}

.check input[type="radio"] {
  border-radius: 50%;
}

.check input[type="radio"]:checked {
  background: #fff;
  border-width: 10px;
}

.check-off {
  color: #757575;
}

.check-off input {
  background: #fafafa;
  border-color: #cfcfcf;
}

.group-setup {
  --inset: 31px;
  display: flex;
  justify-content: space-between;
  align-items: flex-start;
  padding-top: 18px;
  padding-right: 114px;
  padding-bottom: 34px;
}

.setup-name {
  display: flex;
  gap: 99px;
  padding-top: 29px;
}

.dwg-text {
  font: 500 20px 'Noto Sans', sans-serif;
  text-anchor: middle;
  fill: #54431f;
}

.group-printer {
  display: flex;
  justify-content: space-between;
  padding-top: 10px;
  padding-right: 50px;
  padding-bottom: 13px;
}

.printer-info {
  display: flex;
  flex-direction: column;
  width: 809px;
  padding-top: 5px;
}

.field {
  display: grid;
  grid-template-columns: 176px 1fr;
  align-items: center;
}

.info-rows {
  margin-top: 21px;
}

.info-rows .field {
  height: 62px;
}

.printer-select {
  position: relative;
}

.dialog .printer-select select {
  width: 100%;
  height: 50px;
  padding-left: 52px;
}

/* icon and focus ring sit over the select */
.printer-select svg {
  position: absolute;
  left: 4px; top: 4px;
}

.printer-select::after {
  content: '';
  position: absolute;
  inset: 2px 46px 2px 3px;
  border: 1px dotted #333;
  pointer-events: none;
}

.btn-pdf {
  align-self: flex-end;
  width: 279px;
  margin-top: auto;
}

.printer-side {
  display: flex;
  flex-direction: column;
  gap: 34px;
  width: 248px;
}

.dim {
  font: 25px 'Liberation Mono', monospace;
  fill: #333;
}

.group-style {
  --inset: 32px;
  padding-top: 32px;
  padding-right: 27px;
  padding-bottom: 52px;
}

.style-row {
  display: flex;
  gap: 2px;
  margin-bottom: 22px;
}

.dialog .style-row select {
  flex: 1;
  height: 48px;
  margin-top: 1px;
  padding-left: 6px;
}

.icon-btn {
  display: flex;
  align-items: center;
  justify-content: center;
  width: 62px;
  height: 62px;
  background: #f9f9f9;
  border-color: #f4f4f4;
}

.group-shaded {
  --inset: 32px;
  display: grid;
  grid-template-columns: 181px minmax(0, 1fr);
  grid-template-rows: 45px 44px 56px;
  row-gap: 38px;
  align-items: start;
  padding-top: 26px;
  padding-right: 24px;
  padding-bottom: 36px;
}

.group-shaded label {
  padding-top: 9px;
}

.off-label {
  color: #a2a2a2;
  text-shadow: 1px 1px 0 #fff;
}

.dialog #shade {
  height: 45px;
  background:
    url("data:image/svg+xml,%3Csvg xmlns='http://www.w3.org/2000/svg' width='20' height='11'%3E%3Cpath d='M1 1l9 9 9-9' fill='none' stroke='%23b0b0b0' stroke-width='2'/%3E%3C/svg%3E") no-repeat right 11px center,
    linear-gradient(#efefef, #efefef) no-repeat 2px 5px / 225px 33px,
    #fafafa;
  border-color: #ececec;
  color: #757575;
  opacity: 1;
}

#dpi {
  width: 100%;
  background: #efefef;
  border: 1px solid #fafafa;
  color: #757575;
}

.group-paper {
  padding-top: 26px;
  padding-bottom: 38px;
}

.group-paper select {
  width: 810px;
}

.split .column {
  flex: 1;
}

.group-area {
  display: flex;
  flex-direction: column;
  gap: 20px;
  padding-top: 23px;
  padding-bottom: 48px;
}

.group-area select {
  width: 214px;
}

.group-offset {
  --inset: 32px;
  display: flex;
  flex-direction: column;
  gap: 26px;
  padding-top: 10px;
  padding-bottom: 38px;
}

.offset-row {
  display: flex;
  align-items: center;
}

.axis {
  width: 60px;
  padding-top: 10px;
}

.unit {
  width: 160px;
  padding-left: 28px;
}

.offset-row .check {
  margin-left: 28px;
  padding-top: 8px;
}

.group-scale {
  --inset: 14px;
  width: 447px;
  padding-top: 29px;
  padding-bottom: 38px;
}

.scale-row {
  display: flex;
  margin: 30px 0 39px;
}

.scale-label {
  width: 83px;
  padding-top: 10px;
}

.scale-row select {
  width: 326px;
}

.scale-values {
  display: flex;
  flex-direction: column;
  gap: 22px;
  margin-left: 83px;
}

.value-row {
  display: flex;
  align-items: center;
  gap: 9px;
}

.value-row .text {
  width: 130px;
}

.unit-select {
  width: 146px;
  margin-bottom: 8px;
}

.equals {
  margin-left: 2px;
}

.group-options {
  --inset: 32px;
  display: flex;
  flex-direction: column;
  gap: 23px;
  padding-top: 21px;
  padding-bottom: 21px;
}

.group-orientation {
  display: flex;
  justify-content: space-between;
  align-items: flex-start;
  padding-top: 21px;
  padding-right: 75px;
  padding-bottom: 18px;
}

.orientation-list {
  display: flex;
  flex-direction: column;
  gap: 30px;
}

.check-indent {
  margin-left: 4px;
}

.page-icon {
  margin-top: 21px;
}

.page-letter {
  font: 500 57px 'Noto Sans', sans-serif;
  text-anchor: middle;
  fill: #1a8fe8;
}

.dialog-buttons {
  display: flex;
  gap: 52px;
  padding: 31px 31px 12px;
}

.dialog-buttons .btn {
  width: 186px;
}

.btn-preview {
  margin-right: auto;
}

.dialog-buttons .btn-default {
  border: 2px solid #56a3dc;
}
```
